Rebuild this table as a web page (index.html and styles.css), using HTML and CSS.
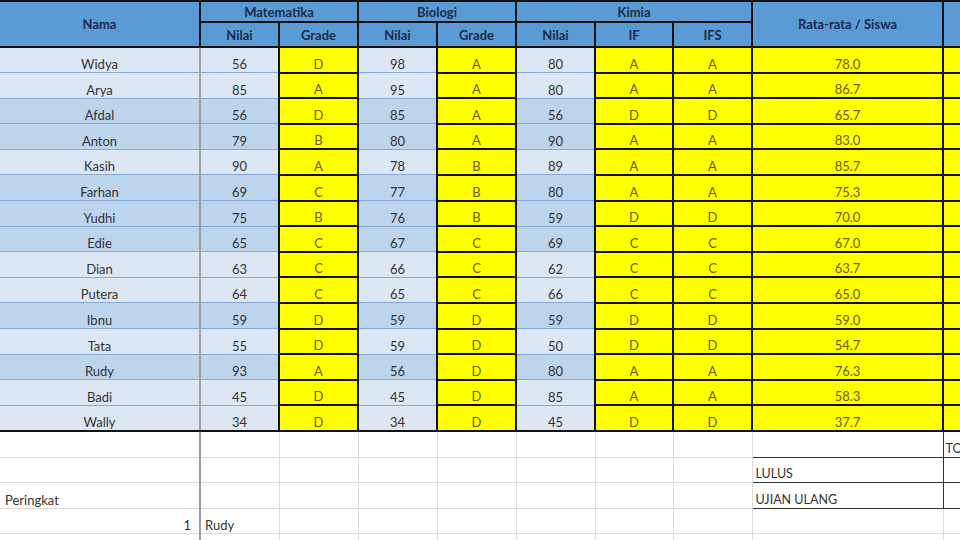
FILE: index.html
```html
<!DOCTYPE html>
<html lang="id">
<head>
<meta charset="utf-8">
<title>Nilai Siswa</title>
<link rel="stylesheet" href="styles.css">
</head>
<body>
<table class="sheet">
  <colgroup>
    <col class="c-name"><col class="c-n"><col class="c-n"><col class="c-n"><col class="c-n"><col class="c-n"><col class="c-n7"><col class="c-n"><col class="c-avg"><col class="c-x">
  </colgroup>
  <thead>
    <tr class="h1">
      <th rowspan="2" class="hd hname">Nama</th>
      <th colspan="2" class="hd">Matematika</th>
      <th colspan="2" class="hd">Biologi</th>
      <th colspan="3" class="hd">Kimia</th>
      <th rowspan="2" class="hd">Rata-rata / Siswa</th>
      <th rowspan="2" class="hd"></th>
    </tr>
    <tr class="h2">
      <th class="hd">Nilai</th><th class="hd">Grade</th>
      <th class="hd">Nilai</th><th class="hd">Grade</th>
      <th class="hd">Nilai</th><th class="hd">IF</th><th class="hd">IFS</th>
    </tr>
  </thead>
  <tbody>
    <tr class="r lt"><td class="name">Widya</td><td class="num">56</td><td class="g">D</td><td class="num">98</td><td class="g">A</td><td class="num">80</td><td class="g">A</td><td class="g">A</td><td class="g">78.0</td><td class="g"></td></tr>
    <tr class="r lt"><td class="name">Arya</td><td class="num">85</td><td class="g">A</td><td class="num">95</td><td class="g">A</td><td class="num">80</td><td class="g">A</td><td class="g">A</td><td class="g">86.7</td><td class="g"></td></tr>
    <tr class="r dk"><td class="name">Afdal</td><td class="num">56</td><td class="g">D</td><td class="num">85</td><td class="g">A</td><td class="num">56</td><td class="g">D</td><td class="g">D</td><td class="g">65.7</td><td class="g"></td></tr>
    <tr class="r dk"><td class="name">Anton</td><td class="num">79</td><td class="g">B</td><td class="num">80</td><td class="g">A</td><td class="num">90</td><td class="g">A</td><td class="g">A</td><td class="g">83.0</td><td class="g"></td></tr>
    <tr class="r lt"><td class="name">Kasih</td><td class="num">90</td><td class="g">A</td><td class="num">78</td><td class="g">B</td><td class="num">89</td><td class="g">A</td><td class="g">A</td><td class="g">85.7</td><td class="g"></td></tr>
    <tr class="r dk"><td class="name">Farhan</td><td class="num">69</td><td class="g">C</td><td class="num">77</td><td class="g">B</td><td class="num">80</td><td class="g">A</td><td class="g">A</td><td class="g">75.3</td><td class="g"></td></tr>
    <tr class="r dk"><td class="name">Yudhi</td><td class="num">75</td><td class="g">B</td><td class="num">76</td><td class="g">B</td><td class="num">59</td><td class="g">D</td><td class="g">D</td><td class="g">70.0</td><td class="g"></td></tr>
    <tr class="r dk"><td class="name">Edie</td><td class="num">65</td><td class="g">C</td><td class="num">67</td><td class="g">C</td><td class="num">69</td><td class="g">C</td><td class="g">C</td><td class="g">67.0</td><td class="g"></td></tr>
    <tr class="r lt"><td class="name">Dian</td><td class="num">63</td><td class="g">C</td><td class="num">66</td><td class="g">C</td><td class="num">62</td><td class="g">C</td><td class="g">C</td><td class="g">63.7</td><td class="g"></td></tr>
    <tr class="r lt"><td class="name">Putera</td><td class="num">64</td><td class="g">C</td><td class="num">65</td><td class="g">C</td><td class="num">66</td><td class="g">C</td><td class="g">C</td><td class="g">65.0</td><td class="g"></td></tr>
    <tr class="r dk"><td class="name">Ibnu</td><td class="num">59</td><td class="g">D</td><td class="num">59</td><td class="g">D</td><td class="num">59</td><td class="g">D</td><td class="g">D</td><td class="g">59.0</td><td class="g"></td></tr>
    <tr class="r lt"><td class="name">Tata</td><td class="num">55</td><td class="g">D</td><td class="num">59</td><td class="g">D</td><td class="num">50</td><td class="g">D</td><td class="g">D</td><td class="g">54.7</td><td class="g"></td></tr>
    <tr class="r dk"><td class="name">Rudy</td><td class="num">93</td><td class="g">A</td><td class="num">56</td><td class="g">D</td><td class="num">80</td><td class="g">A</td><td class="g">A</td><td class="g">76.3</td><td class="g"></td></tr>
    <tr class="r lt"><td class="name">Badi</td><td class="num">45</td><td class="g">D</td><td class="num">45</td><td class="g">D</td><td class="num">85</td><td class="g">A</td><td class="g">A</td><td class="g">58.3</td><td class="g"></td></tr>
    <tr class="r lt last"><td class="name">Wally</td><td class="num">34</td><td class="g">D</td><td class="num">34</td><td class="g">D</td><td class="num">45</td><td class="g">D</td><td class="g">D</td><td class="g">37.7</td><td class="g"></td></tr>
    <tr class="e"><td class="ename"></td><td></td><td></td><td></td><td></td><td></td><td></td><td></td><td class="box"></td><td class="box bx">TOTAL</td></tr>
    <tr class="e"><td class="ename"></td><td></td><td></td><td></td><td></td><td></td><td></td><td></td><td class="box">LULUS</td><td class="box bx"></td></tr>
    <tr class="e"><td class="ename">Peringkat</td><td></td><td></td><td></td><td></td><td></td><td></td><td></td><td class="box">UJIAN ULANG</td><td class="box bx"></td></tr>
    <tr class="e"><td class="ename rank">1</td><td>Rudy</td><td></td><td></td><td></td><td></td><td></td><td></td><td></td><td></td></tr>
    <tr class="e"><td class="ename"></td><td></td><td></td><td></td><td></td><td></td><td></td><td></td><td></td><td></td></tr>
  </tbody>
</table>
</body>
</html>
```
FILE: styles.css
```css
html, body {
  margin: 0;
  padding: 0;
  background: #ffffff;
  overflow: hidden;
  width: 960px;
  height: 540px;
}

.sheet {
  table-layout: fixed;
  border-collapse: collapse;
  width: 1043px;
  font-family: Lato, "Liberation Sans", sans-serif;
  font-size: 13px;
  color: #333333;
}

.c-name { width: 200px; }
.c-n { width: 79px; }
.c-n7 { width: 78px; }
.c-avg { width: 191px; }
.c-x { width: 100px; }

.hd {
  background: #5b9bd5;
  color: #1c2b4a;
  font-weight: 700;
  font-size: 13px;
  border: 2px solid #111;
  padding: 0;
  text-align: center;
  vertical-align: middle;
  line-height: 16px;
}

.h1 .hd { height: 19px; }
.h2 .hd { height: 23px; }
.hname { border-left: none; }

.r td {
  height: 22.6px;
  padding: 0 0 1px 0;
  text-align: center;
  vertical-align: bottom;
  line-height: 14px;
  white-space: nowrap;
}

.lt td { background: #dde7f3; }
.dk td { background: #bdd4ed; }

.r .name {
  border-bottom: 1px solid #86a9d8;
  border-right: 2px solid #9e9e9e;
}
.r .num {
  border-bottom: 1px solid #86a9d8;
}

.r td.g {
  background: #ffff00;
  color: #665c00;
  border: 2px solid #111;
}

.last td { border-bottom: 2px solid #111; }
.last .name, .last .num { border-bottom: 2px solid #111; }

.e td {
  height: 23.6px;
  padding: 0 0 1px 4px;
  border: 1px solid #dcdcdc;
  vertical-align: bottom;
  line-height: 14px;
  white-space: nowrap;
  text-align: left;
  color: #333;
}
.e td.ename {
  border-left: none;
  border-right: 2px solid #9e9e9e;
  padding-left: 5px;
}
.e td.rank {
  text-align: right;
  padding-right: 8px;
}
.e td.box {
  border: 1.5px solid #333;
  padding-left: 3px;
  font-size: 12.5px;
}
.e td.bx {
  padding-left: 2px;
}
```
